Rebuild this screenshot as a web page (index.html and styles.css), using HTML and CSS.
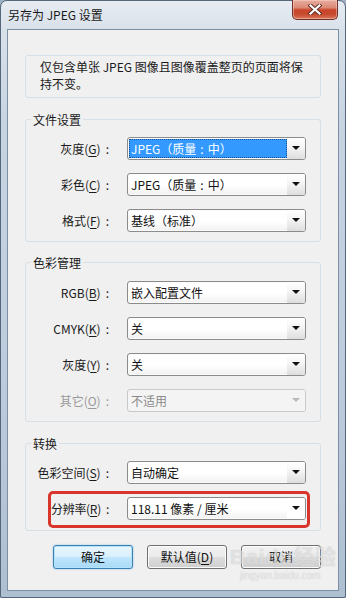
FILE: index.html
```html
<!DOCTYPE html>
<html lang="zh-CN">
<head>
<meta charset="utf-8">
<title>另存为 JPEG 设置</title>
<link rel="stylesheet" href="styles.css">
</head>
<body>
<div class="window">
  <div class="titlebar">
    <span class="title">另存为 JPEG 设置</span>
    <div class="close">
      <svg width="14" height="11" viewBox="0 0 14 11">
        <path d="M2.5 1.5 L11.5 9.5 M11.5 1.5 L2.5 9.5" stroke="#5a2a22" stroke-width="4" stroke-linecap="square"/>
        <path d="M2.5 1.5 L11.5 9.5 M11.5 1.5 L2.5 9.5" stroke="#ffffff" stroke-width="2.2" stroke-linecap="square"/>
      </svg>
    </div>
  </div>
  <div class="client">
    <div class="info">仅包含单张 JPEG 图像且图像覆盖整页的页面将保<br>持不变。</div>

    <div class="group g1">
      <div class="legend">文件设置</div>
      <div class="row">
        <span class="label">灰度(<u>G</u>)<span class="colon">:</span></span>
        <div class="combo focus"><span class="val sel">JPEG（质量<span class="fwc">:</span>中）</span><span class="arrow"></span></div>
      </div>
      <div class="row">
        <span class="label">彩色(<u>C</u>)<span class="colon">:</span></span>
        <div class="combo"><span class="val">JPEG（质量<span class="fwc">:</span>中）</span><span class="arrow"></span></div>
      </div>
      <div class="row">
        <span class="label">格式(<u>F</u>)<span class="colon">:</span></span>
        <div class="combo"><span class="val">基线（标准）</span><span class="arrow"></span></div>
      </div>
    </div>

    <div class="group g2">
      <div class="legend">色彩管理</div>
      <div class="row">
        <span class="label">RGB(<u>B</u>)<span class="colon">:</span></span>
        <div class="combo"><span class="val">嵌入配置文件</span><span class="arrow"></span></div>
      </div>
      <div class="row">
        <span class="label">CMYK(<u>K</u>)<span class="colon">:</span></span>
        <div class="combo"><span class="val">关</span><span class="arrow"></span></div>
      </div>
      <div class="row">
        <span class="label">灰度(<u>Y</u>)<span class="colon">:</span></span>
        <div class="combo"><span class="val">关</span><span class="arrow"></span></div>
      </div>
      <div class="row disabled">
        <span class="label">其它(<u>O</u>)<span class="colon">:</span></span>
        <div class="combo"><span class="val">不适用</span><span class="arrow"></span></div>
      </div>
    </div>

    <div class="group g3">
      <div class="legend">转换</div>
      <div class="row">
        <span class="label">色彩空间(<u>S</u>)<span class="colon">:</span></span>
        <div class="combo"><span class="val">自动确定</span><span class="arrow"></span></div>
      </div>
      <div class="row marked">
        <span class="label">分辨率(<u>R</u>)<span class="colon">:</span></span>
        <div class="combo plain"><span class="val">118.11 像素 / 厘米</span><span class="arrow"></span></div>
        <div class="mark"></div>
      </div>
    </div>

    <div class="buttons">
      <button class="btn default">确定</button>
      <button class="btn">默认值(<u>D</u>)</button>
      <button class="btn">取消</button>
    </div>

    <div class="watermark"><span class="wm-big">Baidu经验</span><span class="wm-small">jingyan.baidu.com</span></div>
  </div>
</div>
</body>
</html>
```

FILE: styles.css
```css
* { box-sizing: border-box; }

html, body {
  margin: 0;
  padding: 0;
  width: 346px;
  height: 598px;
  overflow: hidden;
  background: #9fb0c3;
}

body {
  font-family: "Noto Sans CJK SC", "Noto Sans", sans-serif;
  font-size: 12px;
  color: #111;
}

.window {
  width: 346px;
  height: 598px;
  border: 1px solid #56677b;
  border-radius: 7px 7px 2px 2px;
  background: linear-gradient(180deg, #e7ecf2 0px, #d9e1ea 28px, #c7d4e2 120px, #bccbdc 400px, #aebfd2 598px);
  display: flex;
  flex-direction: column;
}

.titlebar {
  height: 28px;
  display: flex;
  align-items: flex-start;
  flex: none;
}

.title {
  margin-left: 7px;
  margin-top: 5px;
  line-height: 17px;
  color: #1a1a1a;
}

.close {
  margin-left: auto;
  margin-right: 7px;
  margin-top: -1px;
  width: 46px;
  height: 20px;
  border: 1px solid #6e3128;
  border-top: none;
  border-radius: 0 0 5px 5px;
  background: linear-gradient(180deg, #e8ad9f 0%, #dc8a77 40%, #c9472c 52%, #c84a2e 75%, #d9795b 100%);
  box-shadow: inset 0 0 0 1px rgba(255, 220, 210, 0.45);
  display: flex;
  align-items: center;
  justify-content: center;
}

.client {
  position: relative;
  margin: 0 6px 6px 6px;
  height: 562px;
  border: 1px solid #7d8fa3;
  background: #f0f0f0;
  display: flex;
  flex-direction: column;
}

.info {
  margin: 25px 17px 0 17px;
  height: 43px;
  border: 1px solid #d5dfe5;
  border-radius: 3px;
  padding: 2px 0 0 14px;
  line-height: 17px;
  color: #1a1a1a;
}

.group {
  position: relative;
  margin: 21px 17px 0 17px;
  border: 1px solid #d5dfe5;
  border-radius: 3px;
  display: flex;
  flex-direction: column;
  gap: 13px;
}

.g1 { padding: 17px 0 9px 0; }
.g2 { margin-top: 20px; padding: 18px 0 9px 0; }
.g3 { margin-top: 21px; padding: 17px 0 10px 0; }

.legend {
  position: absolute;
  top: -9px;
  left: 5px;
  padding: 0 2px;
  line-height: 17px;
  background: #f0f0f0;
  color: #1a1a1a;
}

.row {
  position: relative;
  display: grid;
  grid-template-columns: 86px 179px;
  column-gap: 15px;
  align-items: center;
  height: 23px;
}

.label {
  text-align: right;
  white-space: nowrap;
  color: #1a1a1a;
}

.colon {
  margin-left: 5px;
  margin-right: 3px;
}

.marked .label { letter-spacing: -0.3px; }

u { text-decoration: underline; text-underline-offset: 2px; }

.fwc { margin: 0 4px; }

.combo {
  height: 23px;
  border: 1px solid #8b8b8b;
  border-radius: 3px;
  background: linear-gradient(180deg, #ffffff 0%, #ffffff 55%, #f1f1f1 100%);
  display: flex;
  align-items: stretch;
  box-shadow: inset 0 0 0 1px #fbfbfb;
}

.val {
  flex: 1;
  margin: 1px 0 1px 1px;
  padding-left: 2px;
  line-height: 19px;
  white-space: nowrap;
  color: #111;
}

.val.sel {
  background: #3399ff;
  color: #fff;
  outline: 1px dotted #1a4f8a;
  outline-offset: -1px;
}

.arrow {
  width: 18px;
  flex: none;
  position: relative;
  background: linear-gradient(180deg, #ffffff 0%, #f4f4f4 45%, #dedede 100%);
  border-radius: 0 2px 2px 0;
}

.arrow::after {
  content: "";
  position: absolute;
  left: 5px;
  top: 8px;
  border-left: 4px solid transparent;
  border-right: 4px solid transparent;
  border-top: 4px solid #111;
}

.combo.plain .arrow { background: #ffffff; }

.disabled .label { color: #9a9a9a; }
.disabled .combo {
  border-color: #c9c9c9;
  background: #f4f4f4;
  box-shadow: none;
}
.disabled .val { color: #8a8a8a; }
.disabled .arrow { background: #f4f4f4; }
.disabled .arrow::after { border-top-color: #b8b8b8; }

.mark {
  position: absolute;
  top: -6px;
  bottom: -8px;
  left: 22px;
  right: 10px;
  border: 3px solid #d8362c;
  border-radius: 5px;
  pointer-events: none;
}

.buttons {
  margin-top: 14px;
  padding-right: 17px;
  display: flex;
  justify-content: flex-end;
  gap: 14px;
}

.btn {
  width: 80px;
  height: 24px;
  font-family: inherit;
  font-size: 12px;
  color: #111;
  border: 1px solid #707070;
  border-radius: 3px;
  background: linear-gradient(180deg, #f2f2f2 0%, #ebebeb 48%, #dddddd 52%, #cfcfcf 100%);
  box-shadow: inset 0 0 0 1px #fcfcfc;
  padding: 0;
  line-height: 20px;
}

.btn.default {
  border-color: #3c7fb1;
  background: linear-gradient(180deg, #eaf6fd 0%, #d9f0fc 48%, #bee6fd 52%, #a7d9f5 100%);
  box-shadow: inset 0 0 0 1px #b5e3fb, 0 0 2px #7ec3ef;
}

.watermark {
  position: absolute;
  left: 222px;
  top: 514px;
  display: flex;
  flex-direction: column;
  align-items: flex-start;
  pointer-events: none;
  color: rgba(255, 255, 255, 0.5);
  text-shadow: 0 0 1px rgba(120, 120, 120, 0.4);
  font-family: "Liberation Sans", "Noto Sans CJK SC", sans-serif;
}

.wm-big {
  font-size: 21px;
  font-weight: bold;
  line-height: 26px;
  letter-spacing: 1px;
}

.wm-small {
  font-size: 10px;
  line-height: 12px;
  margin-left: 10px;
}
```
